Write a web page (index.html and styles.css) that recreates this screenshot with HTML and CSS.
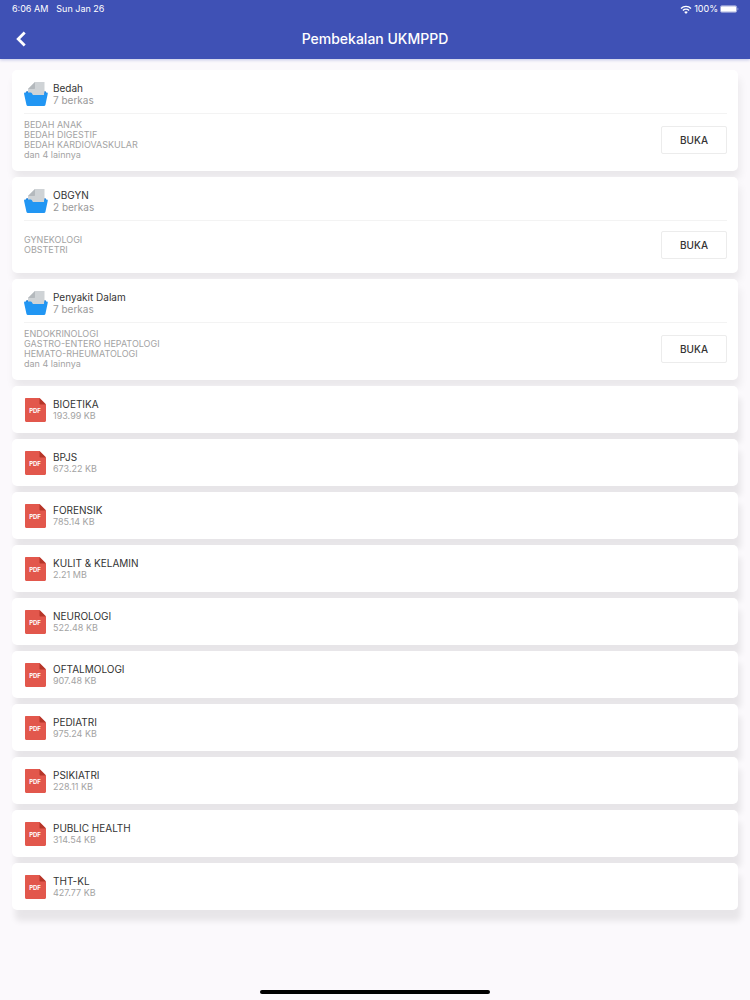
FILE: index.html
```html
<!DOCTYPE html>
<html lang="id">
<head>
  <meta charset="UTF-8">
  <meta name="viewport" content="width=device-width, initial-scale=1.0">
  <title>Pembekalan UKMPPD</title>
  <link rel="stylesheet" href="styles.css">
</head>
<body>
  <!-- Shared icons -->
  <svg class="sprite" aria-hidden="true">
    <symbol id="icon-folder" viewBox="0 0 24 24">
      <path fill="#1976d2" d="M2 10.500c0-.8.400-1.200 1-1.200h18c.6 0 1 .4 1 1.200V16H2z"/>
      <path fill="#cfd3d6" d="M11 0h9.500v16H4V7z"/>
      <path fill="#b4b9bd" d="M11 0v6.200c0 .5-.3.8-.8.8H4z"/>
      <path fill="#2196f3" d="M1.200 10.500h5.400c.7 0 1 .2 1.300.8l.7 1.200c.2.4.5.5.9.5h10.600V11.500c0-.6.4-1 1-1h1.600c.8 0 1.200.6 1 1.400l-2.300 11c-.2.700-.7 1.100-1.400 1.100H3.900c-.7 0-1.200-.4-1.400-1.100L.1 11.900c-.2-.8.3-1.400 1.100-1.400z"/>
    </symbol>
    <symbol id="icon-pdf" viewBox="0 0 24 24">
      <path fill="#e2574c" d="M2 0h13.500l6.500 6.500v16c0 .9-.6 1.500-1.500 1.500h-18c-.9 0-1.500-.6-1.500-1.500V1c0-.6.4-1 1-1z"/>
      <path fill="#b53629" d="M15.500 0l6.500 6.500h-5.500c-.6 0-1-.4-1-1z"/>
      <text x="11" y="15" text-anchor="middle" class="pdf-label">PDF</text>
    </symbol>
  </svg>

  <header class="header">
    <div class="status">
      <div class="status-group">
        <span>6:06 AM</span>
        <span>Sun Jan 26</span>
      </div>
      <div class="status-right">
        <svg class="wifi" viewBox="0 0 12 9" aria-hidden="true">
          <path d="M1 3.400a7.200 7.200 0 0 1 10 0M2.900 5.400a4.500 4.500 0 0 1 6.200 0" fill="none" stroke="#fff" stroke-width="1.400"/>
          <path d="M6 8.900L4.200 7a2.600 2.600 0 0 1 3.600 0z" fill="#fff"/>
        </svg>
        <span>100%</span>
        <svg class="battery" viewBox="0 0 20 8" aria-hidden="true">
          <rect x=".5" y=".5" width="17" height="7" rx="1.500" fill="none" stroke="#fff" stroke-opacity=".5"/>
          <rect x="1" y="1" width="16" height="6" rx="1" fill="#fff"/>
          <path d="M18.500 2.700v2.600c1.200-.4 1.200-2.200 0-2.600z" fill="#fff" fill-opacity=".5"/>
        </svg>
      </div>
    </div>
    <div class="toolbar">
      <button class="back" type="button" aria-label="Kembali">
        <svg viewBox="0 0 10 16" aria-hidden="true"><path d="M8.700 1.500L2.200 8l6.500 6.500" fill="none" stroke="#fff" stroke-width="2.800"/></svg>
      </button>
      <h1>Pembekalan UKMPPD</h1>
    </div>
  </header>

  <main class="list">
    <section class="card folder">
      <div class="card-head">
        <svg class="icon" aria-hidden="true"><use href="#icon-folder"/></svg>
        <div>
          <h2>Bedah</h2>
          <p class="count">7 berkas</p>
        </div>
      </div>
      <div class="card-body">
        <ul class="contents">
          <li>BEDAH ANAK</li>
          <li>BEDAH DIGESTIF</li>
          <li>BEDAH KARDIOVASKULAR</li>
          <li>dan 4 lainnya</li>
        </ul>
        <button class="open" type="button">BUKA</button>
      </div>
    </section>

    <section class="card folder">
      <div class="card-head">
        <svg class="icon" aria-hidden="true"><use href="#icon-folder"/></svg>
        <div>
          <h2>OBGYN</h2>
          <p class="count">2 berkas</p>
        </div>
      </div>
      <div class="card-body">
        <ul class="contents">
          <li>GYNEKOLOGI</li>
          <li>OBSTETRI</li>
        </ul>
        <button class="open" type="button">BUKA</button>
      </div>
    </section>

    <section class="card folder">
      <div class="card-head">
        <svg class="icon" aria-hidden="true"><use href="#icon-folder"/></svg>
        <div>
          <h2>Penyakit Dalam</h2>
          <p class="count">7 berkas</p>
        </div>
      </div>
      <div class="card-body">
        <ul class="contents">
          <li>ENDOKRINOLOGI</li>
          <li>GASTRO-ENTERO HEPATOLOGI</li>
          <li>HEMATO-RHEUMATOLOGI</li>
          <li>dan 4 lainnya</li>
        </ul>
        <button class="open" type="button">BUKA</button>
      </div>
    </section>

    <a class="card file" href="#bioetika">
      <svg class="icon" aria-hidden="true"><use href="#icon-pdf"/></svg>
      <div>
        <h2>BIOETIKA</h2>
        <p class="size">193.99 KB</p>
      </div>
    </a>
    <a class="card file" href="#bpjs">
      <svg class="icon" aria-hidden="true"><use href="#icon-pdf"/></svg>
      <div>
        <h2>BPJS</h2>
        <p class="size">673.22 KB</p>
      </div>
    </a>
    <a class="card file" href="#forensik">
      <svg class="icon" aria-hidden="true"><use href="#icon-pdf"/></svg>
      <div>
        <h2>FORENSIK</h2>
        <p class="size">785.14 KB</p>
      </div>
    </a>
    <a class="card file" href="#kulit-kelamin">
      <svg class="icon" aria-hidden="true"><use href="#icon-pdf"/></svg>
      <div>
        <h2>KULIT &amp; KELAMIN</h2>
        <p class="size">2.21 MB</p>
      </div>
    </a>
    <a class="card file" href="#neurologi">
      <svg class="icon" aria-hidden="true"><use href="#icon-pdf"/></svg>
      <div>
        <h2>NEUROLOGI</h2>
        <p class="size">522.48 KB</p>
      </div>
    </a>
    <a class="card file" href="#oftalmologi">
      <svg class="icon" aria-hidden="true"><use href="#icon-pdf"/></svg>
      <div>
        <h2>OFTALMOLOGI</h2>
        <p class="size">907.48 KB</p>
      </div>
    </a>
    <a class="card file" href="#pediatri">
      <svg class="icon" aria-hidden="true"><use href="#icon-pdf"/></svg>
      <div>
        <h2>PEDIATRI</h2>
        <p class="size">975.24 KB</p>
      </div>
    </a>
    <a class="card file" href="#psikiatri">
      <svg class="icon" aria-hidden="true"><use href="#icon-pdf"/></svg>
      <div>
        <h2>PSIKIATRI</h2>
        <p class="size">228.11 KB</p>
      </div>
    </a>
    <a class="card file" href="#public-health">
      <svg class="icon" aria-hidden="true"><use href="#icon-pdf"/></svg>
      <div>
        <h2>PUBLIC HEALTH</h2>
        <p class="size">314.54 KB</p>
      </div>
    </a>
    <a class="card file" href="#tht-kl">
      <svg class="icon" aria-hidden="true"><use href="#icon-pdf"/></svg>
      <div>
        <h2>THT-KL</h2>
        <p class="size">427.77 KB</p>
      </div>
    </a>
  </main>

  <footer class="home">
    <div class="home-bar"></div>
  </footer>
</body>
</html>
```
FILE: styles.css
```css
* {
  box-sizing: border-box;
  margin: 0;
  padding: 0;
}

body {
  display: flex;
  flex-direction: column;
  min-height: 100vh;
  background-color: #fbf9fc;
  color: #333;
  font-family: Inter, "Liberation Sans", sans-serif;
}

.sprite {
  display: none;
}

.header {
  background-color: #3f51b5;
  color: #fff;
  box-shadow: 0 1px 3px rgba(63, 81, 181, 0.3);
}

.status {
  display: flex;
  justify-content: space-between;
  height: 18px;
  padding: 0 11px 0 12px;
  font-size: 9px;
  line-height: 18px;
}

.status-group {
  display: flex;
  gap: 8px;
}

.status-right {
  display: flex;
  align-items: center;
  gap: 2px;
}

.wifi {
  width: 12px;
  height: 9px;
}

.battery {
  width: 19px;
  height: 8px;
}

.toolbar {
  display: grid;
  grid-template-columns: 42px 1fr 42px;
  align-items: center;
  height: 41px;
}

.toolbar h1 {
  font-size: 14px;
  font-weight: 500;
  text-align: center;
}

.back {
  display: flex;
  justify-content: center;
  background: none;
  border: none;
  cursor: pointer;
}

.back svg {
  width: 10px;
  height: 16px;
}

.list {
  display: flex;
  flex-direction: column;
  gap: 6px;
  padding: 11px 12px;
}

.card {
  background-color: #fff;
  border-radius: 5px;
  box-shadow: 3px 11px 6px rgba(0, 0, 0, 0.08);
  padding: 12px;
}

.folder {
  padding: 12px 11px 11px 12px;
  box-shadow: 2px 8px 8px rgba(0, 0, 0, 0.07);
}

.card h2 {
  font-size: 10px;
  font-weight: 400;
  line-height: 12px;
}

.card-head {
  display: flex;
  gap: 5px;
  padding-bottom: 7px;
  border-bottom: 1px solid #f3f3f3;
}

.icon {
  width: 24px;
  height: 24px;
}

.count {
  color: #999;
  font-size: 10px;
  line-height: 12px;
}

.card-body {
  display: flex;
  justify-content: space-between;
  align-items: center;
  min-height: 41px;
  padding-top: 6px;
}

.contents {
  list-style: none;
  color: #a3a3a3;
  font-size: 9px;
  line-height: 10px;
}

.open {
  width: 66px;
  height: 28px;
  background-color: #fff;
  border: 1px solid #ececec;
  border-radius: 2px;
  color: #333;
  font-family: inherit;
  font-size: 10px;
  font-weight: 500;
  cursor: pointer;
}

.file {
  display: flex;
  gap: 5px;
  padding: 12px 12px 11px;
  color: inherit;
  text-decoration: none;
}

.size {
  color: #a3a3a3;
  font-size: 9px;
  line-height: 12px;
}

.pdf-label {
  fill: #fff;
  font-size: 6px;
  font-weight: 700;
}

.home {
  display: flex;
  justify-content: center;
  margin-top: auto;
  padding-bottom: 6px;
}

.home-bar {
  width: 230px;
  height: 4px;
  border-radius: 2px;
  background-color: #000;
}
```
